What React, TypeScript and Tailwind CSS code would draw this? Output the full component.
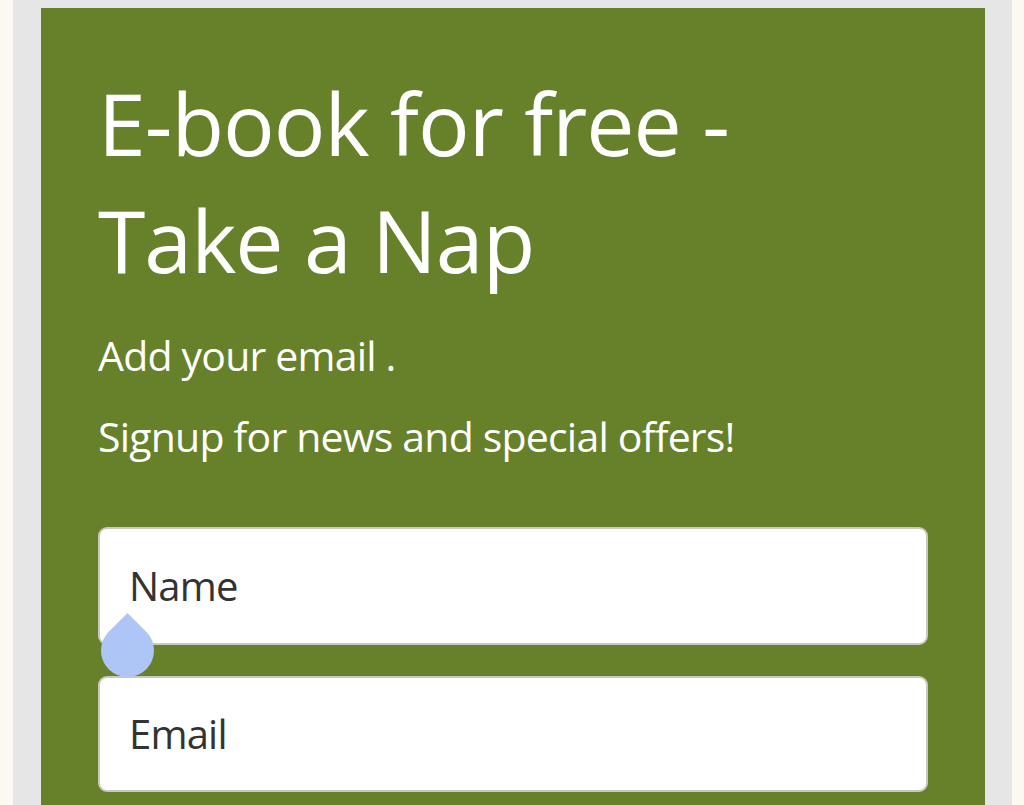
import React from "react";

export default function App() {
  return (
    <div
      className="h-[805px] w-[1024px] overflow-hidden bg-[#fcf9f3] pl-[13px]"
      style={{ fontFamily: '"Open Sans", "Noto Sans", sans-serif' }}
    >
      <div className="h-full w-[999px] bg-[#e6e6e6] pl-[28px] pt-[8px]">
        <div className="h-[797px] w-[944px] bg-[#67812a] px-[57px] pt-[56px] text-white">
          <h1 className="text-[86px] leading-[117px] font-normal tracking-[-1px]">
            E-book for free -<br />Take a Nap
          </h1>
          <p className="mt-[29px] text-[41px] leading-[57px] tracking-[-0.8px]">Add your email .</p>
          <p className="mt-[24px] text-[41px] leading-[57px] tracking-[-0.8px]">Signup for news and special offers!</p>
          <div className="mt-[62px] flex flex-col gap-[31px]">
            <div className="relative flex h-[118px] items-center rounded-[9px] border-2 border-[#c9c9c2] bg-white pl-[29px] text-[40px] tracking-[-0.8px] text-[#333333]">
              Name
              <div className="absolute left-[1px] top-[95px] h-[53px] w-[53px] rotate-45 rounded-full rounded-tl-none bg-[#aec6f5]" />
            </div>
            <div className="flex h-[116px] items-center rounded-[9px] border-2 border-[#c9c9c2] bg-white pl-[29px] text-[40px] tracking-[-0.8px] text-[#333333]">
              Email
            </div>
          </div>
        </div>
      </div>
    </div>
  );
}
